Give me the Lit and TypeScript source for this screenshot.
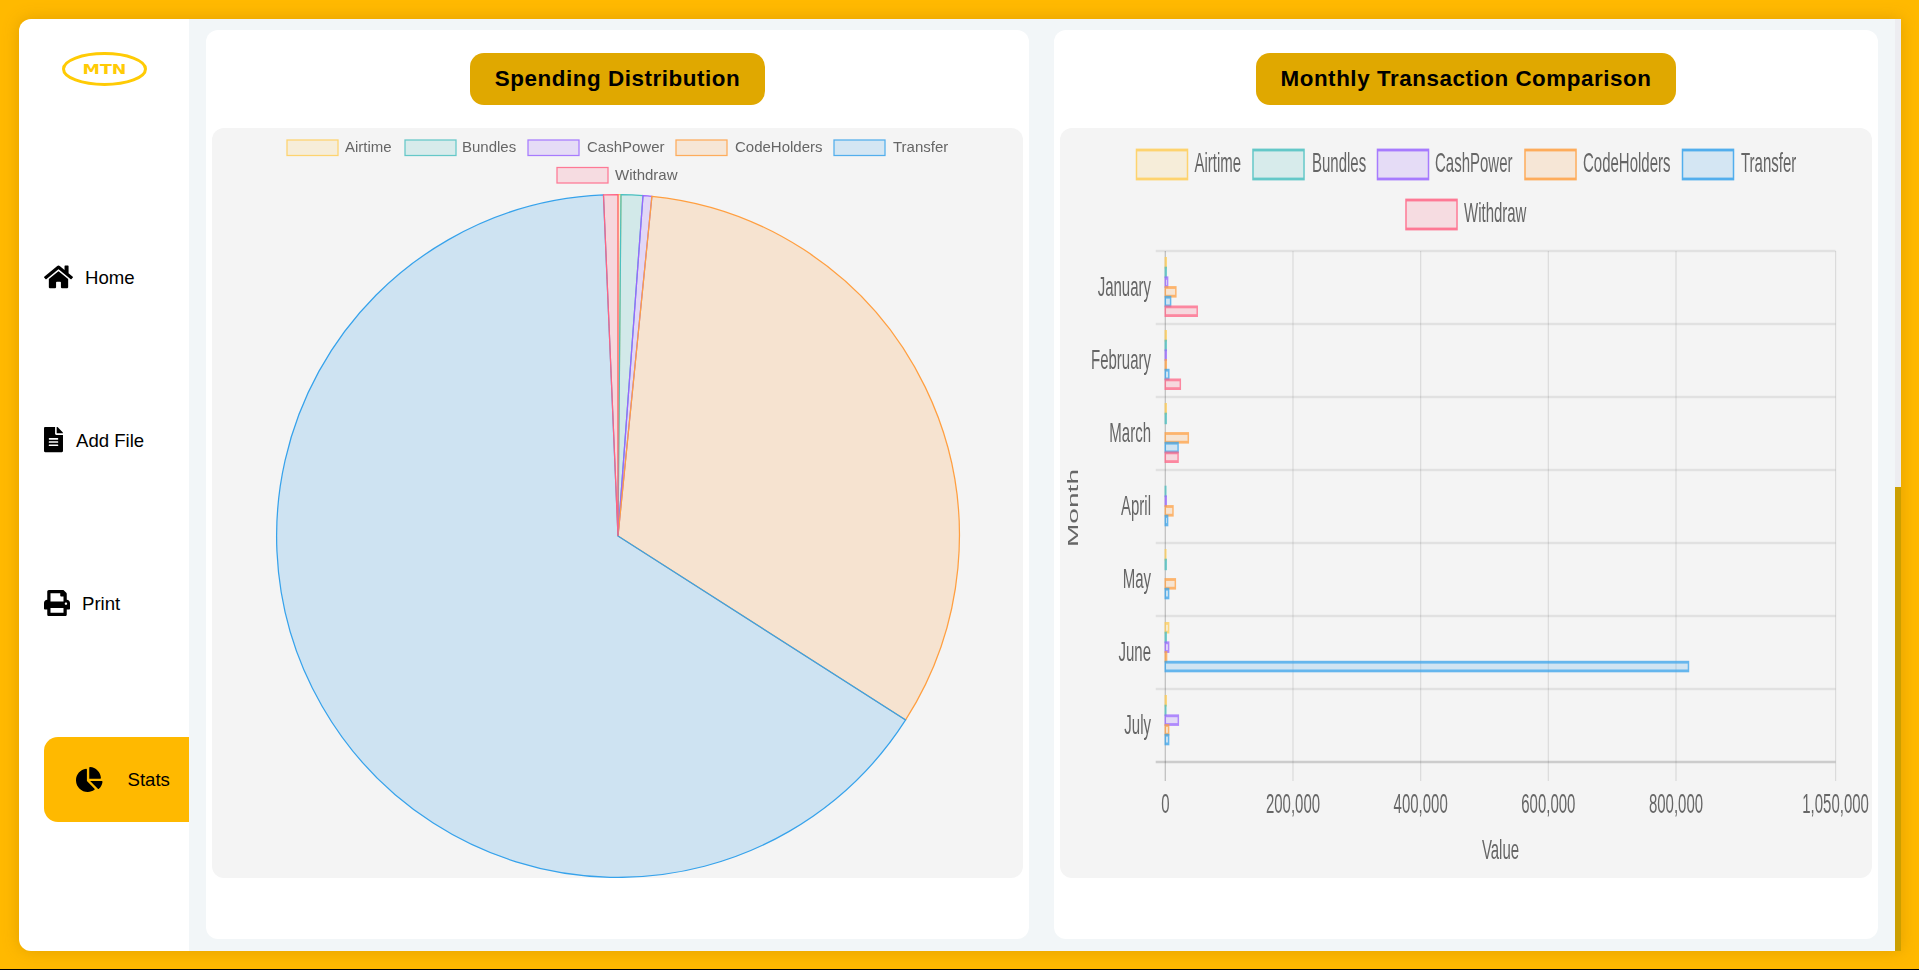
import { LitElement, html, svg, css } from 'lit';
import { customElement } from 'lit/decorators.js';

const series = [
  { name: 'Airtime', rgb: '255,205,86' },
  { name: 'Bundles', rgb: '75,192,192' },
  { name: 'CashPower', rgb: '153,102,255' },
  { name: 'CodeHolders', rgb: '255,159,64' },
  { name: 'Transfer', rgb: '54,162,235' },
  { name: 'Withdraw', rgb: '255,99,132' },
];

// degrees of each slice, clockwise from the top
const pieShares = [0.5, 3.7, 1.5, 116.9, 234.96, 2.44];

const months = [
  { name: 'January', baseline: 168, values: [1500, 1500, 3600, 16500, 8300, 50000] },
  { name: 'February', baseline: 241, values: [1500, 1500, 1500, 1500, 5500, 23500] },
  { name: 'March', baseline: 314, values: [1500, 1500, 0, 36000, 20000, 20000] },
  { name: 'April', baseline: 387, values: [0, 800, 1500, 12000, 3600, 0] },
  { name: 'May', baseline: 460, values: [800, 1500, 0, 15700, 5200, 0] },
  { name: 'June', baseline: 533, values: [5200, 1500, 5200, 2000, 819500, 0] },
  { name: 'July', baseline: 606, values: [1500, 800, 20400, 5200, 5200, 0] },
];

const ticks = [0, 200000, 400000, 600000, 800000, 1050000];

// the bar chart canvas is stretched vertically in the page
const SY = 1.875;
const PLOT = { left: 105.3, right: 775.6, top: 123, rowH: 73 };

const tickX = (v: number) => PLOT.left + (v / 1050000) * (PLOT.right - PLOT.left);

function legend(
  boxes: number[][],
  rows: { box: number; base: number }[],
  boxH: number,
  strokeW: number,
) {
  return series.map((s, i) => {
    const row = i < 5 ? rows[0] : rows[1];
    return svg`
      <rect x=${boxes[i][0]} y=${row.box} width="51" height=${boxH}
        fill="rgba(${s.rgb},0.2)" stroke="rgb(${s.rgb})" stroke-width=${strokeW} opacity="0.85"></rect>
      <text x=${boxes[i][1]} y=${row.base} class="chart-text">${s.name}</text>
    `;
  });
}

function pieChart() {
  const cx = 406;
  const cy = 408;
  const r = 341.4;
  let angle = 0;
  const slices = series.map((s, i) => {
    const from = (angle * Math.PI) / 180;
    angle += pieShares[i];
    const to = (angle * Math.PI) / 180;
    const large = pieShares[i] > 180 ? 1 : 0;
    const d = `M${cx} ${cy}L${cx + r * Math.sin(from)} ${cy - r * Math.cos(from)}A${r} ${r} 0 ${large} 1 ${cx + r * Math.sin(to)} ${cy - r * Math.cos(to)}Z`;
    return svg`<path d=${d} fill="rgba(${s.rgb},0.2)" stroke="rgb(${s.rgb})" stroke-width="1.25"></path>`;
  });
  return html`
    <svg class="chart pie" viewBox="0 0 811 750" width="811" height="750">
      ${legend(
        [[75, 133], [193, 250], [316, 375], [464, 523], [622, 681], [345, 403]],
        [{ box: 12, base: 24 }, { box: 39.5, base: 52 }],
        15.5,
        1.25,
      )}
      ${slices}
    </svg>
  `;
}

function barChart() {
  const bottom = PLOT.top + PLOT.rowH * 7;
  const y = (v: number) => v / SY;
  const barH = 9.7;

  const vLines = ticks.map((t) => svg`
    <line x1=${tickX(t)} x2=${tickX(t)} y1=${y(PLOT.top)} y2=${y(bottom + 19)}
      stroke=${t === 0 ? 'rgba(0,0,0,0.22)' : 'rgba(0,0,0,0.1)'} stroke-width="1.25"></line>
    <text x=${tickX(t)} y=${y(684.7)} text-anchor="middle" class="chart-text">${t.toLocaleString('en-US')}</text>
  `);

  const hLines = months.map((_, i) => svg`
    <line x1="95.7" x2=${PLOT.right} y1=${y(PLOT.top + PLOT.rowH * i)} y2=${y(PLOT.top + PLOT.rowH * i)}
      stroke="rgba(0,0,0,0.075)" stroke-width="1.4"></line>
  `);

  const rows = months.map((m, i) => {
    const rowTop = PLOT.top + PLOT.rowH * i + 7.4;
    const bars = m.values.map((v, j) => {
      if (!v) return null;
      const w = tickX(v) - PLOT.left;
      const s = series[j];
      return svg`<rect x=${PLOT.left} y=${y(rowTop + j * barH)} width=${w} height=${y(barH - 1)}
        fill="rgba(${s.rgb},0.25)" stroke="rgb(${s.rgb})" stroke-width="1.5" opacity="0.75"></rect>`;
    });
    return svg`
      <text x="91" y=${y(m.baseline)} text-anchor="end" class="chart-text">${m.name}</text>
      ${bars}
    `;
  });

  return html`
    <svg class="chart bars" viewBox="0 0 812 750" width="812" height="750">
      <g transform="scale(1 ${SY})">
        ${legend(
          [[76.5, 134.5], [193, 252], [317.5, 375], [465, 523], [622.5, 681], [346, 404]],
          [{ box: y(22), base: y(43.7) }, { box: y(72), base: y(94.3) }],
          y(29),
          1.5,
        )}
        ${vLines}
        ${hLines}
        <line x1="95.7" x2=${PLOT.right} y1=${y(bottom)} y2=${y(bottom)} stroke="rgba(0,0,0,0.16)" stroke-width="1.4"></line>
        ${rows}
        <text x="440.5" y=${y(731)} text-anchor="middle" class="chart-text">Value</text>
        <text transform="translate(18 ${y(380)}) rotate(-90)" text-anchor="middle" class="chart-text">Month</text>
      </g>
    </svg>
  `;
}

@customElement('app-root')
export class AppRoot extends LitElement {
  static styles = css`
    :host {
      display: block;
      font-family: 'Liberation Sans', Arial, sans-serif;
    }
    .frame {
      box-sizing: border-box;
      width: 1919px;
      height: 970px;
      padding: 19px 18px 18px 19px;
      background: #ffb900;
      border-bottom: 1px solid #000;
    }
    .shell {
      display: flex;
      height: 932px;
      border-radius: 12px 0 0 12px;
      box-shadow: 0 0 16px rgba(190, 130, 0, 0.45);
      overflow: hidden;
    }
    .sidebar {
      display: flex;
      flex-direction: column;
      box-sizing: border-box;
      flex: 0 0 170px;
      padding-top: 33px;
      background: #fff;
    }
    .logo {
      display: block;
      align-self: center;
      margin-bottom: 148.5px;
    }
    .logo text {
      font-family: 'DejaVu Sans', sans-serif;
      font-weight: 700;
      font-size: 14.5px;
      fill: #ffcb05;
    }
    .nav {
      display: flex;
      flex-direction: column;
      gap: 78px;
      padding-left: 25px;
    }
    .nav-item {
      display: flex;
      align-items: center;
      gap: 12px;
      height: 85px;
      font-size: 18.6px;
      color: #000;
    }
    .nav-item span {
      padding-top: 2px;
    }
    .nav-item.file {
      gap: 13px;
    }
    .nav-item.active {
      gap: 25px;
      margin-top: 13.5px;
      padding-left: 32px;
      background: #ffb900;
      border-radius: 14px 0 0 14px;
    }
    .nav-item.active span {
      padding-top: 0;
    }
    .main {
      display: flex;
      flex: 1;
      gap: 25px;
      padding: 11px 17px 12px;
      background: #f2f6f8;
    }
    .card {
      display: flex;
      flex-direction: column;
      align-items: center;
      flex: 1;
      padding: 23px 6px 0;
      background: #fff;
      border-radius: 12px;
    }
    .title {
      display: flex;
      align-items: center;
      height: 52px;
      margin: 0 0 23px;
      padding: 0 24.5px;
      background: #e0a800;
      border-radius: 14px;
      font-size: 22.4px;
      font-weight: 700;
      letter-spacing: 0.55px;
      color: #000;
    }
    .panel {
      align-self: stretch;
      height: 750px;
      background: #f4f4f4;
      border-radius: 12px;
      overflow: hidden;
    }
    .chart {
      display: block;
    }
    .chart.pie {
      filter: blur(0.3px);
    }
    .chart.bars {
      filter: blur(0.45px);
    }
    .chart-text {
      font-family: 'Liberation Sans', Arial, sans-serif;
      font-size: 15px;
      fill: #666;
    }
    .scrollbar {
      display: flex;
      flex-direction: column;
      flex: 0 0 6px;
      background: #ededf1;
    }
    .scrollbar-track {
      flex: 0 0 468px;
    }
    .scrollbar-thumb {
      flex: 1;
      background: #cc9f00;
    }
  `;

  render() {
    return html`
      <div class="frame">
        <div class="shell">
          <aside class="sidebar">
            <svg class="logo" width="85" height="34" viewBox="0 0 85 34">
              <ellipse cx="42.5" cy="17" rx="41" ry="15.5" fill="none" stroke="#ffcb05" stroke-width="3"></ellipse>
              <text x="20.5" y="22.3" textLength="44" lengthAdjust="spacingAndGlyphs">MTN</text>
            </svg>
            <nav class="nav">
              <div class="nav-item">
                <svg width="29" height="25.8" viewBox="0 0 576 512"><path d="M280.37 148.26L96 300.11V464a16 16 0 0 0 16 16l112.06-.29a16 16 0 0 0 15.92-16V368a16 16 0 0 1 16-16h64a16 16 0 0 1 16 16v95.64a16 16 0 0 0 16 16.05L464 480a16 16 0 0 0 16-16V300L295.67 148.26a12.19 12.19 0 0 0-15.3 0zM571.6 251.47L488 182.56V44.05a12 12 0 0 0-12-12h-56a12 12 0 0 0-12 12v72.61L318.47 43a48 48 0 0 0-61 0L4.34 251.47a12 12 0 0 0-1.6 16.9l25.5 31A12 12 0 0 0 45.15 301l235.22-193.74a12.19 12.19 0 0 1 15.3 0L530.9 301a12 12 0 0 0 16.9-1.6l25.5-31a12 12 0 0 0-1.7-16.93z"></path></svg>
                <span>Home</span>
              </div>
              <div class="nav-item file">
                <svg width="19" height="25.3" viewBox="0 0 384 512"><path d="M224 136V0H24C10.7 0 0 10.7 0 24v464c0 13.3 10.7 24 24 24h336c13.3 0 24-10.7 24-24V160H248c-13.2 0-24-10.8-24-24zm64 236c0 6.6-5.4 12-12 12H108c-6.6 0-12-5.4-12-12v-8c0-6.6 5.4-12 12-12h168c6.6 0 12 5.4 12 12v8zm0-64c0 6.6-5.4 12-12 12H108c-6.6 0-12-5.4-12-12v-8c0-6.6 5.4-12 12-12h168c6.6 0 12 5.4 12 12v8zm0-72v8c0 6.6-5.4 12-12 12H108c-6.6 0-12-5.4-12-12v-8c0-6.6 5.4-12 12-12h168c6.6 0 12 5.4 12 12zm96-114.1v6.1H256V0h6.1c6.4 0 12.5 2.5 17 7l97.9 98c4.5 4.5 7 10.6 7 16.9z"></path></svg>
                <span>Add File</span>
              </div>
              <div class="nav-item">
                <svg width="26" height="26" viewBox="0 0 512 512"><path d="M448 192V77.25c0-8.49-3.37-16.62-9.37-22.63L393.37 9.37c-6-6-14.14-9.37-22.63-9.37H96C78.33 0 64 14.33 64 32v160c-35.35 0-64 28.65-64 64v112c0 8.84 7.16 16 16 16h48v96c0 17.67 14.33 32 32 32h320c17.67 0 32-14.33 32-32v-96h48c8.84 0 16-7.16 16-16V256c0-35.35-28.65-64-64-64zm-64 256H128v-96h256v96zm0-224H128V64h192v48c0 8.84 7.16 16 16 16h48v96zm48 72c-13.25 0-24-10.75-24-24 0-13.26 10.75-24 24-24s24 10.74 24 24c0 13.25-10.75 24-24 24z"></path></svg>
                <span>Print</span>
              </div>
              <div class="nav-item active">
                <svg width="26.5" height="25" viewBox="0 0 544 512"><path d="M527.79 288H290.5l158.03 158.03c6.04 6.04 15.98 6.53 22.19.68 38.7-36.46 65.32-85.61 73.13-140.86 1.34-9.46-6.51-17.85-16.06-17.85zm-15.83-64.8C503.72 103.74 408.26 8.28 288.8.04 279.68-.59 272 7.1 272 16.24V240h223.77c9.14 0 16.82-7.68 16.19-16.8zM224 288V50.71c0-9.55-8.39-17.4-17.84-16.06C86.99 51.49-4.1 155.6.14 280.37 4.5 408.51 114.83 513.59 243.03 511.98c50.4-.63 96.97-16.87 135.26-44.03 7.9-5.6 8.42-17.23 1.57-24.08L224 288z"></path></svg>
                <span>Stats</span>
              </div>
            </nav>
          </aside>
          <main class="main">
            <section class="card">
              <h2 class="title">Spending Distribution</h2>
              <div class="panel">${pieChart()}</div>
            </section>
            <section class="card">
              <h2 class="title">Monthly Transaction Comparison</h2>
              <div class="panel">${barChart()}</div>
            </section>
          </main>
          <div class="scrollbar">
            <div class="scrollbar-track"></div>
            <div class="scrollbar-thumb"></div>
          </div>
        </div>
      </div>
    `;
  }
}
